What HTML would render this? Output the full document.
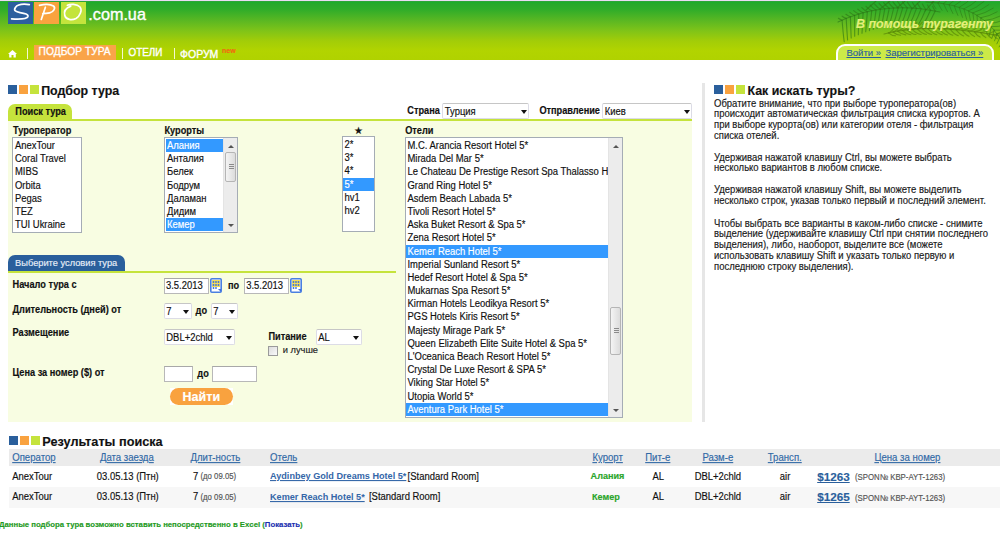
<!DOCTYPE html>
<html><head><meta charset="utf-8"><style>
*{margin:0;padding:0;box-sizing:border-box}
html,body{width:1000px;height:540px;overflow:hidden;background:#fff;font-family:"Liberation Sans",sans-serif;color:#111;-webkit-text-stroke:0.15px}
.a{position:absolute;white-space:nowrap;line-height:1}
#hdr{position:absolute;left:0;top:0;width:1000px;height:60px;background:linear-gradient(#3f9a4a 0px,#1aae28 1px,#28a82c 3px,#2eac2a 8px,#5cb822 20px,#80c418 30px,#a2cd08 40px,#b2d400 50px,#b0d200 59px);border-top:1px solid #eadcf4}
.sq{position:absolute;width:9px;height:9px}
.b{background:#2a5f9c}.o{background:#f9a23f}.g{background:#c5e33c}
.h1{font-size:12.4px;font-weight:bold;color:#111}
.lbl{font-size:9.2px;font-weight:bold;color:#111;transform:translateY(0.5px) scaleY(1.13);transform-origin:0 0.8465em}
.list{position:absolute;background:#fff;border:1px solid #a5acb5;overflow:hidden}
.opt{font-size:9.45px;line-height:13.2px;height:13.2px;padding-left:1.5px;white-space:nowrap;color:#111}
.opt.sel{background:#3399ff;color:#fff}
.opt span{display:inline-block;transform:scaleY(1.08);transform-origin:0 9.87px}
.sb{position:absolute;top:0;right:0;width:14px;bottom:0;background:#ececec;border-left:1px solid #e4e4e4}
.thumb{position:absolute;left:1px;width:11px;background:linear-gradient(90deg,#f4f4f4,#dcdcdc);border:1px solid #b5b5b5;border-radius:2px}
.up,.dn{position:absolute;left:4px;width:0;height:0;border-left:3px solid transparent;border-right:3px solid transparent}
.up{border-bottom:3px solid #555}
.dn{border-top:3px solid #555}
.grip{position:absolute;left:2.5px;width:5px;height:1px;background:#8a8a8a}
.sel2{position:absolute;background:#fff;border:1px solid #dcdce6;border-top:1.5px solid #c6c6c6;border-radius:2px}
.sel2 span{position:absolute;left:1.8px;font-size:9.45px;line-height:1;color:#111;transform:scaleY(1.08);transform-origin:0 0.8465em}
.arr{position:absolute;width:0;height:0;border-left:3px solid transparent;border-right:3px solid transparent;border-top:4px solid #111}
.inp{position:absolute;background:#fff;border:1px solid #b8b8b8;border-top-color:#a8a8a8}
.cal{position:absolute;width:12px;height:15px}
.th{font-size:9.6px;color:#3169a6;text-decoration:underline;transform:scaleY(1.08);transform-origin:0 0.8465em}
.td{font-size:9.45px;color:#111;transform:scaleY(1.08);transform-origin:0 0.8465em}
.hl{font-size:9.12px;font-weight:bold;color:#3466a8;-webkit-text-stroke:0;text-decoration:underline;transform:scaleY(1.08);transform-origin:0 0.8465em}
.sm{font-size:7.8px;color:#555;transform:scaleY(1.08);transform-origin:0 0.8465em}
p.t{position:absolute;left:714px;font-size:9.5px;line-height:10.046px;color:#1a1a1a;white-space:nowrap;transform:scaleY(1.08);transform-origin:0 0}
</style></head><body>
<div id="hdr"></div>
<svg class="a" style="left:0;top:1px" width="1000" height="59" viewBox="0 1 1000 59">
<g><path d="M940.0 12.0 Q885.0 0.0 838.0 22.0" stroke="#2c7616" stroke-width="1.1" fill="none" opacity="0.62" stroke-linecap="round"/>
<path d="M935.2 11.0 Q931.3 19.7 927.4 25.2" stroke="#2c7616" stroke-width="1.1" fill="none" opacity="0.62" stroke-linecap="round"/>
<path d="M935.2 11.0 Q933.9 9.2 932.6 6.2" stroke="#2c7616" stroke-width="1.1" fill="none" opacity="0.62" stroke-linecap="round"/>
<path d="M930.5 10.2 Q926.7 19.1 922.9 24.8" stroke="#2c7616" stroke-width="1.1" fill="none" opacity="0.62" stroke-linecap="round"/>
<path d="M930.5 10.2 Q929.0 8.2 927.5 5.1" stroke="#2c7616" stroke-width="1.1" fill="none" opacity="0.62" stroke-linecap="round"/>
<path d="M925.8 9.4 Q922.1 18.6 918.5 24.5" stroke="#2c7616" stroke-width="1.1" fill="none" opacity="0.62" stroke-linecap="round"/>
<path d="M925.8 9.4 Q924.1 7.4 922.4 4.0" stroke="#2c7616" stroke-width="1.1" fill="none" opacity="0.62" stroke-linecap="round"/>
<path d="M921.1 8.9 Q917.6 18.3 914.1 24.3" stroke="#2c7616" stroke-width="1.1" fill="none" opacity="0.62" stroke-linecap="round"/>
<path d="M921.1 8.9 Q919.2 6.7 917.4 3.2" stroke="#2c7616" stroke-width="1.1" fill="none" opacity="0.62" stroke-linecap="round"/>
<path d="M916.5 8.4 Q913.1 18.1 909.7 24.3" stroke="#2c7616" stroke-width="1.1" fill="none" opacity="0.62" stroke-linecap="round"/>
<path d="M916.5 8.4 Q914.4 6.2 912.4 2.6" stroke="#2c7616" stroke-width="1.1" fill="none" opacity="0.62" stroke-linecap="round"/>
<path d="M911.8 8.1 Q908.7 18.0 905.5 24.4" stroke="#2c7616" stroke-width="1.1" fill="none" opacity="0.62" stroke-linecap="round"/>
<path d="M911.8 8.1 Q909.6 5.8 907.4 2.1" stroke="#2c7616" stroke-width="1.1" fill="none" opacity="0.62" stroke-linecap="round"/>
<path d="M907.3 7.8 Q904.2 18.0 901.2 24.6" stroke="#2c7616" stroke-width="1.1" fill="none" opacity="0.62" stroke-linecap="round"/>
<path d="M907.3 7.8 Q904.9 5.6 902.5 1.8" stroke="#2c7616" stroke-width="1.1" fill="none" opacity="0.62" stroke-linecap="round"/>
<path d="M902.7 7.8 Q899.9 18.1 897.1 24.9" stroke="#2c7616" stroke-width="1.1" fill="none" opacity="0.62" stroke-linecap="round"/>
<path d="M902.7 7.8 Q900.2 5.5 897.7 1.7" stroke="#2c7616" stroke-width="1.1" fill="none" opacity="0.62" stroke-linecap="round"/>
<path d="M898.2 7.8 Q895.6 18.4 893.0 25.4" stroke="#2c7616" stroke-width="1.1" fill="none" opacity="0.62" stroke-linecap="round"/>
<path d="M898.2 7.8 Q895.6 5.6 892.9 1.9" stroke="#2c7616" stroke-width="1.1" fill="none" opacity="0.62" stroke-linecap="round"/>
<path d="M893.7 8.0 Q891.3 18.8 888.9 25.9" stroke="#2c7616" stroke-width="1.1" fill="none" opacity="0.62" stroke-linecap="round"/>
<path d="M893.7 8.0 Q891.0 5.9 888.2 2.2" stroke="#2c7616" stroke-width="1.1" fill="none" opacity="0.62" stroke-linecap="round"/>
<path d="M889.2 8.3 Q887.1 19.4 884.9 26.6" stroke="#2c7616" stroke-width="1.1" fill="none" opacity="0.62" stroke-linecap="round"/>
<path d="M889.2 8.3 Q886.4 6.3 883.6 2.6" stroke="#2c7616" stroke-width="1.1" fill="none" opacity="0.62" stroke-linecap="round"/>
<path d="M884.8 8.7 Q882.9 20.0 881.0 27.5" stroke="#2c7616" stroke-width="1.1" fill="none" opacity="0.62" stroke-linecap="round"/>
<path d="M884.8 8.7 Q881.9 6.8 879.1 3.3" stroke="#2c7616" stroke-width="1.1" fill="none" opacity="0.62" stroke-linecap="round"/>
<path d="M880.4 9.3 Q878.7 20.8 877.1 28.4" stroke="#2c7616" stroke-width="1.1" fill="none" opacity="0.62" stroke-linecap="round"/>
<path d="M880.4 9.3 Q877.5 7.5 874.6 4.1" stroke="#2c7616" stroke-width="1.1" fill="none" opacity="0.62" stroke-linecap="round"/>
<path d="M876.0 10.0 Q874.6 21.7 873.2 29.4" stroke="#2c7616" stroke-width="1.1" fill="none" opacity="0.62" stroke-linecap="round"/>
<path d="M876.0 10.0 Q873.1 8.3 870.2 5.1" stroke="#2c7616" stroke-width="1.1" fill="none" opacity="0.62" stroke-linecap="round"/>
<path d="M871.7 10.8 Q870.5 22.7 869.4 30.6" stroke="#2c7616" stroke-width="1.1" fill="none" opacity="0.62" stroke-linecap="round"/>
<path d="M871.7 10.8 Q868.8 9.3 866.0 6.3" stroke="#2c7616" stroke-width="1.1" fill="none" opacity="0.62" stroke-linecap="round"/>
<path d="M867.3 11.8 Q866.5 23.8 865.7 31.8" stroke="#2c7616" stroke-width="1.1" fill="none" opacity="0.62" stroke-linecap="round"/>
<path d="M867.3 11.8 Q864.6 10.4 861.8 7.6" stroke="#2c7616" stroke-width="1.1" fill="none" opacity="0.62" stroke-linecap="round"/>
<path d="M863.1 12.8 Q862.5 25.1 862.0 33.2" stroke="#2c7616" stroke-width="1.1" fill="none" opacity="0.62" stroke-linecap="round"/>
<path d="M863.1 12.8 Q860.4 11.6 857.7 9.1" stroke="#2c7616" stroke-width="1.1" fill="none" opacity="0.62" stroke-linecap="round"/>
<path d="M858.8 14.0 Q858.6 26.4 858.3 34.7" stroke="#2c7616" stroke-width="1.1" fill="none" opacity="0.62" stroke-linecap="round"/>
<path d="M858.8 14.0 Q856.2 13.0 853.7 10.7" stroke="#2c7616" stroke-width="1.1" fill="none" opacity="0.62" stroke-linecap="round"/>
<path d="M854.6 15.4 Q854.7 27.9 854.7 36.3" stroke="#2c7616" stroke-width="1.1" fill="none" opacity="0.62" stroke-linecap="round"/>
<path d="M854.6 15.4 Q852.2 14.5 849.8 12.4" stroke="#2c7616" stroke-width="1.1" fill="none" opacity="0.62" stroke-linecap="round"/>
<path d="M850.4 16.8 Q850.8 29.6 851.2 38.0" stroke="#2c7616" stroke-width="1.1" fill="none" opacity="0.62" stroke-linecap="round"/>
<path d="M850.4 16.8 Q848.1 16.1 845.9 14.3" stroke="#2c7616" stroke-width="1.1" fill="none" opacity="0.62" stroke-linecap="round"/>
<path d="M846.2 18.4 Q846.9 31.3 847.6 39.9" stroke="#2c7616" stroke-width="1.1" fill="none" opacity="0.62" stroke-linecap="round"/>
<path d="M846.2 18.4 Q844.2 17.8 842.1 16.2" stroke="#2c7616" stroke-width="1.1" fill="none" opacity="0.62" stroke-linecap="round"/>
<path d="M842.1 20.2 Q843.1 33.1 844.2 41.8" stroke="#2c7616" stroke-width="1.1" fill="none" opacity="0.62" stroke-linecap="round"/>
<path d="M842.1 20.2 Q840.3 19.6 838.4 18.3" stroke="#2c7616" stroke-width="1.1" fill="none" opacity="0.62" stroke-linecap="round"/>
<path d="M876.0 1.0 Q871.0 5.5 866.0 10.0" stroke="#2c7616" stroke-width="1.1" fill="none" opacity="0.65" stroke-linecap="round"/>
<path d="M890.0 1.0 Q885.0 5.0 880.0 9.0" stroke="#2c7616" stroke-width="1.1" fill="none" opacity="0.65" stroke-linecap="round"/>
<path d="M905.0 1.0 Q901.0 4.5 897.0 8.0" stroke="#2c7616" stroke-width="1.1" fill="none" opacity="0.65" stroke-linecap="round"/>
<path d="M920.0 1.0 Q916.0 5.0 912.0 9.0" stroke="#2c7616" stroke-width="1.1" fill="none" opacity="0.65" stroke-linecap="round"/>
<path d="M934.0 1.0 Q929.5 6.0 925.0 11.0" stroke="#2c7616" stroke-width="1.1" fill="none" opacity="0.65" stroke-linecap="round"/>
<path d="M884.0 34.0 Q930.0 22.0 1000.0 36.0" stroke="#5a8808" stroke-width="1.1" fill="none" opacity="0.7" stroke-linecap="round"/>
<path d="M888.4 32.9 Q891.7 32.1 895.0 26.8" stroke="#5a8808" stroke-width="1.1" fill="none" opacity="0.7" stroke-linecap="round"/>
<path d="M888.4 32.9 Q891.9 35.9 895.5 35.8" stroke="#5a8808" stroke-width="1.1" fill="none" opacity="0.7" stroke-linecap="round"/>
<path d="M893.0 32.0 Q896.7 31.2 900.3 25.5" stroke="#5a8808" stroke-width="1.1" fill="none" opacity="0.7" stroke-linecap="round"/>
<path d="M893.0 32.0 Q896.8 35.3 900.6 35.3" stroke="#5a8808" stroke-width="1.1" fill="none" opacity="0.7" stroke-linecap="round"/>
<path d="M897.6 31.1 Q901.7 30.4 905.8 24.4" stroke="#5a8808" stroke-width="1.1" fill="none" opacity="0.7" stroke-linecap="round"/>
<path d="M897.6 31.1 Q901.7 34.8 905.7 34.9" stroke="#5a8808" stroke-width="1.1" fill="none" opacity="0.7" stroke-linecap="round"/>
<path d="M902.4 30.4 Q906.8 29.7 911.3 23.5" stroke="#5a8808" stroke-width="1.1" fill="none" opacity="0.7" stroke-linecap="round"/>
<path d="M902.4 30.4 Q906.6 34.4 910.9 34.7" stroke="#5a8808" stroke-width="1.1" fill="none" opacity="0.7" stroke-linecap="round"/>
<path d="M907.3 29.8 Q912.0 29.2 916.8 22.7" stroke="#5a8808" stroke-width="1.1" fill="none" opacity="0.7" stroke-linecap="round"/>
<path d="M907.3 29.8 Q911.7 34.2 916.0 34.5" stroke="#5a8808" stroke-width="1.1" fill="none" opacity="0.7" stroke-linecap="round"/>
<path d="M912.2 29.3 Q917.3 28.8 922.3 22.2" stroke="#5a8808" stroke-width="1.1" fill="none" opacity="0.7" stroke-linecap="round"/>
<path d="M912.2 29.3 Q916.7 34.0 921.2 34.5" stroke="#5a8808" stroke-width="1.1" fill="none" opacity="0.7" stroke-linecap="round"/>
<path d="M917.3 28.9 Q922.6 28.6 927.9 21.9" stroke="#5a8808" stroke-width="1.1" fill="none" opacity="0.7" stroke-linecap="round"/>
<path d="M917.3 28.9 Q921.9 33.8 926.5 34.5" stroke="#5a8808" stroke-width="1.1" fill="none" opacity="0.7" stroke-linecap="round"/>
<path d="M922.5 28.6 Q928.0 28.4 933.4 21.8" stroke="#5a8808" stroke-width="1.1" fill="none" opacity="0.7" stroke-linecap="round"/>
<path d="M922.5 28.6 Q927.1 33.8 931.7 34.5" stroke="#5a8808" stroke-width="1.1" fill="none" opacity="0.7" stroke-linecap="round"/>
<path d="M927.8 28.5 Q933.4 28.4 939.0 21.8" stroke="#5a8808" stroke-width="1.1" fill="none" opacity="0.7" stroke-linecap="round"/>
<path d="M927.8 28.5 Q932.4 33.8 936.9 34.7" stroke="#5a8808" stroke-width="1.1" fill="none" opacity="0.7" stroke-linecap="round"/>
<path d="M933.3 28.5 Q938.9 28.5 944.5 22.1" stroke="#5a8808" stroke-width="1.1" fill="none" opacity="0.7" stroke-linecap="round"/>
<path d="M933.3 28.5 Q937.7 33.8 942.2 34.8" stroke="#5a8808" stroke-width="1.1" fill="none" opacity="0.7" stroke-linecap="round"/>
<path d="M938.8 28.6 Q944.4 28.7 950.1 22.5" stroke="#5a8808" stroke-width="1.1" fill="none" opacity="0.7" stroke-linecap="round"/>
<path d="M938.8 28.6 Q943.1 34.0 947.5 35.0" stroke="#5a8808" stroke-width="1.1" fill="none" opacity="0.7" stroke-linecap="round"/>
<path d="M944.4 28.8 Q950.0 29.0 955.6 23.0" stroke="#5a8808" stroke-width="1.1" fill="none" opacity="0.7" stroke-linecap="round"/>
<path d="M944.4 28.8 Q948.6 34.1 952.8 35.3" stroke="#5a8808" stroke-width="1.1" fill="none" opacity="0.7" stroke-linecap="round"/>
<path d="M950.1 29.1 Q955.6 29.5 961.1 23.8" stroke="#5a8808" stroke-width="1.1" fill="none" opacity="0.7" stroke-linecap="round"/>
<path d="M950.1 29.1 Q954.2 34.4 958.2 35.6" stroke="#5a8808" stroke-width="1.1" fill="none" opacity="0.7" stroke-linecap="round"/>
<path d="M956.0 29.6 Q961.3 30.0 966.5 24.6" stroke="#5a8808" stroke-width="1.1" fill="none" opacity="0.7" stroke-linecap="round"/>
<path d="M956.0 29.6 Q959.8 34.7 963.6 35.9" stroke="#5a8808" stroke-width="1.1" fill="none" opacity="0.7" stroke-linecap="round"/>
<path d="M962.0 30.1 Q967.0 30.6 972.0 25.6" stroke="#5a8808" stroke-width="1.1" fill="none" opacity="0.7" stroke-linecap="round"/>
<path d="M962.0 30.1 Q965.5 35.0 969.0 36.2" stroke="#5a8808" stroke-width="1.1" fill="none" opacity="0.7" stroke-linecap="round"/>
<path d="M968.0 30.8 Q972.8 31.4 977.5 26.8" stroke="#5a8808" stroke-width="1.1" fill="none" opacity="0.7" stroke-linecap="round"/>
<path d="M968.0 30.8 Q971.3 35.5 974.5 36.6" stroke="#5a8808" stroke-width="1.1" fill="none" opacity="0.7" stroke-linecap="round"/>
<path d="M974.2 31.6 Q978.6 32.2 983.0 28.0" stroke="#5a8808" stroke-width="1.1" fill="none" opacity="0.7" stroke-linecap="round"/>
<path d="M974.2 31.6 Q977.2 36.0 980.1 37.1" stroke="#5a8808" stroke-width="1.1" fill="none" opacity="0.7" stroke-linecap="round"/>
<path d="M980.5 32.5 Q984.5 33.1 988.6 29.4" stroke="#5a8808" stroke-width="1.1" fill="none" opacity="0.7" stroke-linecap="round"/>
<path d="M980.5 32.5 Q983.1 36.5 985.8 37.6" stroke="#5a8808" stroke-width="1.1" fill="none" opacity="0.7" stroke-linecap="round"/>
<path d="M986.9 33.6 Q990.5 34.2 994.2 30.9" stroke="#5a8808" stroke-width="1.1" fill="none" opacity="0.7" stroke-linecap="round"/>
<path d="M986.9 33.6 Q989.2 37.2 991.6 38.2" stroke="#5a8808" stroke-width="1.1" fill="none" opacity="0.7" stroke-linecap="round"/>
<path d="M993.4 34.7 Q996.6 35.3 999.8 32.5" stroke="#5a8808" stroke-width="1.1" fill="none" opacity="0.7" stroke-linecap="round"/>
<path d="M993.4 34.7 Q995.4 37.9 997.4 38.8" stroke="#5a8808" stroke-width="1.1" fill="none" opacity="0.7" stroke-linecap="round"/>
<path d="M926.0 2.0 Q985.0 4.0 1004.0 46.0" stroke="#2c7616" stroke-width="1.0" fill="none" opacity="0.55" stroke-linecap="round"/>
<path d="M932.1 2.3 Q936.1 -1.3 940.0 -7.4" stroke="#2c7616" stroke-width="1.0" fill="none" opacity="0.55" stroke-linecap="round"/>
<path d="M932.1 2.3 Q934.1 6.4 936.0 8.9" stroke="#2c7616" stroke-width="1.0" fill="none" opacity="0.55" stroke-linecap="round"/>
<path d="M938.0 2.9 Q942.5 -0.9 947.1 -7.5" stroke="#2c7616" stroke-width="1.0" fill="none" opacity="0.55" stroke-linecap="round"/>
<path d="M938.0 2.9 Q940.0 7.4 942.0 10.3" stroke="#2c7616" stroke-width="1.0" fill="none" opacity="0.55" stroke-linecap="round"/>
<path d="M943.6 3.6 Q948.8 -0.2 954.0 -7.1" stroke="#2c7616" stroke-width="1.0" fill="none" opacity="0.55" stroke-linecap="round"/>
<path d="M943.6 3.6 Q945.6 8.6 947.6 11.8" stroke="#2c7616" stroke-width="1.0" fill="none" opacity="0.55" stroke-linecap="round"/>
<path d="M949.1 4.6 Q954.9 0.7 960.6 -6.3" stroke="#2c7616" stroke-width="1.0" fill="none" opacity="0.55" stroke-linecap="round"/>
<path d="M949.1 4.6 Q951.0 10.1 952.9 13.5" stroke="#2c7616" stroke-width="1.0" fill="none" opacity="0.55" stroke-linecap="round"/>
<path d="M954.3 5.8 Q960.6 2.1 967.0 -5.0" stroke="#2c7616" stroke-width="1.0" fill="none" opacity="0.55" stroke-linecap="round"/>
<path d="M954.3 5.8 Q956.1 11.6 957.9 15.4" stroke="#2c7616" stroke-width="1.0" fill="none" opacity="0.55" stroke-linecap="round"/>
<path d="M959.3 7.3 Q966.2 3.7 973.0 -3.3" stroke="#2c7616" stroke-width="1.0" fill="none" opacity="0.55" stroke-linecap="round"/>
<path d="M959.3 7.3 Q960.9 13.4 962.5 17.4" stroke="#2c7616" stroke-width="1.0" fill="none" opacity="0.55" stroke-linecap="round"/>
<path d="M964.0 8.9 Q971.4 5.7 978.7 -1.1" stroke="#2c7616" stroke-width="1.0" fill="none" opacity="0.55" stroke-linecap="round"/>
<path d="M964.0 8.9 Q965.4 15.3 966.7 19.4" stroke="#2c7616" stroke-width="1.0" fill="none" opacity="0.55" stroke-linecap="round"/>
<path d="M968.6 10.8 Q976.3 8.0 984.0 1.5" stroke="#2c7616" stroke-width="1.0" fill="none" opacity="0.55" stroke-linecap="round"/>
<path d="M968.6 10.8 Q969.6 17.3 970.7 21.6" stroke="#2c7616" stroke-width="1.0" fill="none" opacity="0.55" stroke-linecap="round"/>
<path d="M972.9 12.9 Q980.9 10.5 988.9 4.6" stroke="#2c7616" stroke-width="1.0" fill="none" opacity="0.55" stroke-linecap="round"/>
<path d="M972.9 12.9 Q973.6 19.4 974.3 23.8" stroke="#2c7616" stroke-width="1.0" fill="none" opacity="0.55" stroke-linecap="round"/>
<path d="M977.0 15.2 Q985.1 13.4 993.3 8.1" stroke="#2c7616" stroke-width="1.0" fill="none" opacity="0.55" stroke-linecap="round"/>
<path d="M977.0 15.2 Q977.4 21.7 977.7 26.0" stroke="#2c7616" stroke-width="1.0" fill="none" opacity="0.55" stroke-linecap="round"/>
<path d="M980.9 17.7 Q989.0 16.5 997.2 11.8" stroke="#2c7616" stroke-width="1.0" fill="none" opacity="0.55" stroke-linecap="round"/>
<path d="M980.9 17.7 Q980.9 24.1 980.9 28.3" stroke="#2c7616" stroke-width="1.0" fill="none" opacity="0.55" stroke-linecap="round"/>
<path d="M984.6 20.5 Q992.6 19.8 1000.6 15.9" stroke="#2c7616" stroke-width="1.0" fill="none" opacity="0.55" stroke-linecap="round"/>
<path d="M984.6 20.5 Q984.2 26.6 983.9 30.6" stroke="#2c7616" stroke-width="1.0" fill="none" opacity="0.55" stroke-linecap="round"/>
<path d="M988.0 23.5 Q995.7 23.4 1003.5 20.1" stroke="#2c7616" stroke-width="1.0" fill="none" opacity="0.55" stroke-linecap="round"/>
<path d="M988.0 23.5 Q987.3 29.2 986.7 33.0" stroke="#2c7616" stroke-width="1.0" fill="none" opacity="0.55" stroke-linecap="round"/>
<path d="M991.2 26.7 Q998.6 27.1 1005.9 24.6" stroke="#2c7616" stroke-width="1.0" fill="none" opacity="0.55" stroke-linecap="round"/>
<path d="M991.2 26.7 Q990.3 32.0 989.4 35.5" stroke="#2c7616" stroke-width="1.0" fill="none" opacity="0.55" stroke-linecap="round"/>
<path d="M994.2 30.1 Q1001.0 30.9 1007.8 29.1" stroke="#2c7616" stroke-width="1.0" fill="none" opacity="0.55" stroke-linecap="round"/>
<path d="M994.2 30.1 Q993.1 34.9 992.0 38.1" stroke="#2c7616" stroke-width="1.0" fill="none" opacity="0.55" stroke-linecap="round"/>
<path d="M997.0 33.7 Q1003.2 34.9 1009.4 33.7" stroke="#2c7616" stroke-width="1.0" fill="none" opacity="0.55" stroke-linecap="round"/>
<path d="M997.0 33.7 Q995.7 38.1 994.5 40.9" stroke="#2c7616" stroke-width="1.0" fill="none" opacity="0.55" stroke-linecap="round"/>
<path d="M999.6 37.6 Q1005.0 39.0 1010.5 38.3" stroke="#2c7616" stroke-width="1.0" fill="none" opacity="0.55" stroke-linecap="round"/>
<path d="M999.6 37.6 Q998.2 41.4 996.9 43.8" stroke="#2c7616" stroke-width="1.0" fill="none" opacity="0.55" stroke-linecap="round"/>
<path d="M1001.9 41.7 Q1006.6 43.2 1011.4 42.9" stroke="#2c7616" stroke-width="1.0" fill="none" opacity="0.55" stroke-linecap="round"/>
<path d="M1001.9 41.7 Q1000.6 44.9 999.2 46.9" stroke="#2c7616" stroke-width="1.0" fill="none" opacity="0.55" stroke-linecap="round"/></g>
</svg>
<div class="a" style="left:8px;top:2px;width:25px;height:22px;background:#2c5f9e"></div>
<div class="a" style="left:34px;top:2px;width:25px;height:22px;background:#f9a33f"></div>
<div class="a" style="left:61px;top:2px;width:25px;height:22px;background:#c4e43c"></div>
<svg class="a" style="left:0;top:0" width="100" height="26">
<path d="M29.3 4.6 C25 4,18 3.8,15.4 7.4 C13.2 10.6,16 12,20 12.6 C25 13.3,28.6 14.4,27.9 16.6 C27 19.2,20 19.4,11.6 18.9" stroke="#fff" stroke-width="1.7" fill="none" stroke-linecap="round"/>
<path d="M39.5 5.4 C43 4.5,50 3.8,53.5 6 C56 8,53.5 12,49.6 12.9 C47 13.5,44.5 13.7,42.8 13.7 M41.3 19.4 L45.4 7.2" stroke="#fff" stroke-width="1.7" fill="none" stroke-linecap="round"/>
<path d="M67.4 5.3 C70 4,77 3.6,80 7 C82.5 10,80 16,76 18.5 C72 20.5,66 20,64.8 15.5 C63.5 11,66 8,70.7 6.1" stroke="#fff" stroke-width="1.7" fill="none" stroke-linecap="round"/>
</svg>
<div class="a" style="left:88.3px;top:6.2px;font-size:16.2px;color:#fff;-webkit-text-stroke:0.35px #fff">.com.ua</div>

<!-- nav -->
<svg class="a" style="left:8px;top:50px" width="9" height="8" viewBox="0 0 9 8"><path d="M4.5 0 L9 4 L7.8 4 L7.8 7.5 L5.5 7.5 L5.5 5 L3.5 5 L3.5 7.5 L1.2 7.5 L1.2 4 L0 4 Z" fill="#fff"/></svg>
<div class="a" style="left:26.5px;top:47.5px;width:1.3px;height:11.5px;background:#f4f8d0"></div>
<div class="a" style="left:34px;top:45px;width:82px;height:15px;background:#f9a449"></div>
<div class="a" style="left:38.6px;top:47.2px;font-size:10.25px;color:#fff;-webkit-text-stroke:0.3px #fff">ПОДБОР ТУРА</div>
<div class="a" style="left:122px;top:47.5px;width:1.3px;height:11.5px;background:#f4f8d0"></div>
<div class="a" style="left:128.5px;top:47.3px;font-size:9.9px;color:#fff;-webkit-text-stroke:0.35px #fff;transform:scaleY(1.08);transform-origin:0 0">ОТЕЛИ</div>
<div class="a" style="left:173.5px;top:47.5px;width:1.3px;height:11.5px;background:#f4f8d0"></div>
<div class="a" style="left:180px;top:48.9px;font-size:10.5px;color:#fff;-webkit-text-stroke:0.35px #fff;transform:scaleY(1.05);transform-origin:0 0">ФОРУМ</div>
<div class="a" style="left:222px;top:47px;font-size:7px;font-weight:bold;color:#f06a10">new</div>

<div class="a" style="left:856px;top:17.9px;font-size:12.4px;font-weight:bold;font-style:italic;color:#e4f07a">В помощь турагенту</div>
<div class="a" style="left:836px;top:44px;width:158px;height:20px;background:#ccea48;border:2px solid #fff;border-radius:9px 9px 0 0"></div>
<div class="a" style="left:846.5px;top:48px;font-size:9.5px;color:#2a5f9c;text-decoration:underline">Войти »</div>
<div class="a" style="left:885.5px;top:48px;font-size:9.5px;color:#2a5f9c;text-decoration:underline">Зарегистрироваться »</div>
<div class="a" style="left:0;top:60px;width:1000px;height:20px;background:#fff"></div>

<!-- left heading -->
<div class="sq b" style="left:8px;top:85px"></div><div class="sq o" style="left:19px;top:85px"></div><div class="sq g" style="left:30px;top:85px"></div>
<div class="a h1" style="left:41.2px;top:85px">Подбор тура</div>

<div class="a" style="left:8px;top:103.5px;width:64px;height:16.5px;background:#c5e33c;border-radius:7px 7px 0 0"></div>
<div class="a lbl" style="left:15.3px;top:107.5px">Поиск тура</div>
<div class="a" style="left:8px;top:119px;width:684px;height:2px;background:#c5e33c"></div>
<div class="a" style="left:8px;top:121px;width:684px;height:301px;background:#f8fde2"></div>

<div class="a lbl" style="left:407.3px;top:106.6px">Страна</div>
<div class="sel2" style="left:442px;top:103px;width:87px;height:16px"><span style="top:2.5px">Турция</span><div class="arr" style="left:77.5px;top:5.5px"></div></div>
<div class="a lbl" style="left:539.4px;top:106.6px">Отправление</div>
<div class="sel2" style="left:602px;top:103px;width:90px;height:16px"><span style="top:2.5px">Киев</span><div class="arr" style="left:80.5px;top:5.5px"></div></div>

<div class="a lbl" style="left:12.9px;top:127px">Туроператор</div>
<div class="list" style="left:12px;top:137px;width:70px;height:96px;padding:1px 0 0 0.5px"><div class="opt"><span>AnexTour</span></div><div class="opt"><span>Coral Travel</span></div><div class="opt"><span>MIBS</span></div><div class="opt"><span>Orbita</span></div><div class="opt"><span>Pegas</span></div><div class="opt"><span>TEZ</span></div><div class="opt"><span>TUI Ukraine</span></div></div>

<div class="a lbl" style="left:164.5px;top:127px">Курорты</div>
<div class="list" style="left:164px;top:137px;width:74px;height:96px;padding:1px 0 0 0.5px"><div class="opt sel"><span>Алания</span></div><div class="opt"><span>Анталия</span></div><div class="opt"><span>Белек</span></div><div class="opt"><span>Бодрум</span></div><div class="opt"><span>Даламан</span></div><div class="opt"><span>Дидим</span></div><div class="opt sel"><span>Кемер</span></div>
<div class="sb"><div class="up" style="top:7px"></div><div class="thumb" style="top:14px;height:30px"><div class="grip" style="top:11px"></div><div class="grip" style="top:13px"></div><div class="grip" style="top:15px"></div></div><div class="dn" style="top:86px"></div></div></div>

<div class="a" style="left:354px;top:125.8px;font-size:10px;color:#111">★</div>
<div class="list" style="left:342px;top:136px;width:33px;height:96px;padding:1px 0 0 0"><div class="opt"><span>2*</span></div><div class="opt"><span>3*</span></div><div class="opt"><span>4*</span></div><div class="opt sel"><span>5*</span></div><div class="opt"><span>hv1</span></div><div class="opt"><span>hv2</span></div></div>

<div class="a lbl" style="left:405.2px;top:127px">Отели</div>
<div class="list" style="left:405px;top:137px;width:218px;height:281px;padding:1px 0 0 0"><div class="opt"><span>M.C. Arancia Resort Hotel 5*</span></div><div class="opt"><span>Mirada Del Mar 5*</span></div><div class="opt"><span>Le Chateau De Prestige Resort Spa Thalasso Hotel 5*</span></div><div class="opt"><span>Grand Ring Hotel 5*</span></div><div class="opt"><span>Asdem Beach Labada 5*</span></div><div class="opt"><span>Tivoli Resort Hotel 5*</span></div><div class="opt"><span>Aska Buket Resort &amp; Spa 5*</span></div><div class="opt"><span>Zena Resort Hotel 5*</span></div><div class="opt sel"><span>Kemer Reach Hotel 5*</span></div><div class="opt"><span>Imperial Sunland Resort 5*</span></div><div class="opt"><span>Hedef Resort Hotel &amp; Spa 5*</span></div><div class="opt"><span>Mukarnas Spa Resort 5*</span></div><div class="opt"><span>Kirman Hotels Leodikya Resort 5*</span></div><div class="opt"><span>PGS Hotels Kiris Resort 5*</span></div><div class="opt"><span>Majesty Mirage Park 5*</span></div><div class="opt"><span>Queen Elizabeth Elite Suite Hotel &amp; Spa 5*</span></div><div class="opt"><span>L'Oceanica Beach Resort Hotel 5*</span></div><div class="opt"><span>Crystal De Luxe Resort &amp; SPA 5*</span></div><div class="opt"><span>Viking Star Hotel 5*</span></div><div class="opt"><span>Utopia World 5*</span></div><div class="opt sel"><span>Aventura Park Hotel 5*</span></div>
<div class="sb"><div class="up" style="top:7px"></div><div class="thumb" style="top:169px;height:48px"><div class="grip" style="top:20px"></div><div class="grip" style="top:22px"></div><div class="grip" style="top:24px"></div></div><div class="dn" style="top:271px"></div></div></div>

<div class="a" style="left:8px;top:255px;width:117px;height:16px;background:#2a5f9c;border-radius:7px 7px 0 0"></div>
<div class="a" style="left:15.1px;top:258.6px;font-size:9.28px;color:#e8eef8">Выберите условия тура</div>
<div class="a" style="left:8px;top:271px;width:388px;height:2px;background:#c5e33c"></div>

<div class="a lbl" style="left:12.6px;top:280.8px">Начало тура с</div>
<div class="inp" style="left:163.5px;top:278px;width:45px;height:16px"></div>
<div class="a td" style="left:166px;top:281.2px">3.5.2013</div>
<div class="a" style="left:210px;top:278px"><svg class="cal" viewBox="0 0 12 15" width="12" height="15"><rect x="0.8" y="0.8" width="10.4" height="13.4" rx="1" fill="#fff" stroke="#4a7fe0" stroke-width="1.6"/><rect x="2" y="2" width="8" height="7" fill="#f3dd5a"/><g fill="#3a6fe0"><circle cx="3.5" cy="4" r=".9"/><circle cx="6" cy="4" r=".9"/><circle cx="8.5" cy="4" r=".9"/><circle cx="3.5" cy="7" r=".9"/><circle cx="6" cy="7" r=".9"/><circle cx="8.5" cy="7" r=".9"/><circle cx="3.5" cy="10" r=".9"/><circle cx="6" cy="10" r=".9"/></g><path d="M8 11 L11 11 L11 14 Z" fill="#3a6fe0"/></svg></div>
<div class="a lbl" style="left:228px;top:282.2px">по</div>
<div class="inp" style="left:243.7px;top:278px;width:45px;height:16px"></div>
<div class="a td" style="left:246.2px;top:281.2px">3.5.2013</div>
<div class="a" style="left:290px;top:278px"><svg class="cal" viewBox="0 0 12 15" width="12" height="15"><rect x="0.8" y="0.8" width="10.4" height="13.4" rx="1" fill="#fff" stroke="#4a7fe0" stroke-width="1.6"/><rect x="2" y="2" width="8" height="7" fill="#f3dd5a"/><g fill="#3a6fe0"><circle cx="3.5" cy="4" r=".9"/><circle cx="6" cy="4" r=".9"/><circle cx="8.5" cy="4" r=".9"/><circle cx="3.5" cy="7" r=".9"/><circle cx="6" cy="7" r=".9"/><circle cx="8.5" cy="7" r=".9"/><circle cx="3.5" cy="10" r=".9"/><circle cx="6" cy="10" r=".9"/></g><path d="M8 11 L11 11 L11 14 Z" fill="#3a6fe0"/></svg></div>

<div class="a lbl" style="left:12.5px;top:306.3px">Длительность (дней) от</div>
<div class="sel2" style="left:163.5px;top:303px;width:28px;height:16px"><span style="top:2.5px">7</span><div class="arr" style="left:18.5px;top:5.5px"></div></div>
<div class="a lbl" style="left:195.6px;top:307.4px">до</div>
<div class="sel2" style="left:210.5px;top:303px;width:27px;height:16px"><span style="top:2.5px">7</span><div class="arr" style="left:17.5px;top:5.5px"></div></div>

<div class="a lbl" style="left:12.5px;top:329.4px">Размещение</div>
<div class="sel2" style="left:163.5px;top:329px;width:71px;height:16px"><span style="top:2.5px">DBL+2chld</span><div class="arr" style="left:61.5px;top:5.5px"></div></div>
<div class="a lbl" style="left:268.4px;top:333.1px">Питание</div>
<div class="sel2" style="left:315.5px;top:329px;width:46px;height:16px"><span style="top:2.5px">AL</span><div class="arr" style="left:36.5px;top:5.5px"></div></div>
<div class="a" style="left:268px;top:346px;width:10px;height:10px;border:1px solid #9a9a9a;background:linear-gradient(135deg,#dcdcdc,#fafafa)"></div>
<div class="a" style="left:282.7px;top:346.3px;font-size:9.3px;color:#222">и лучше</div>

<div class="a lbl" style="left:12.5px;top:368.8px">Цена за номер ($) от</div>
<div class="inp" style="left:163.5px;top:366px;width:29px;height:16px"></div>
<div class="a lbl" style="left:197.3px;top:370px">до</div>
<div class="inp" style="left:212px;top:366px;width:45px;height:16px"></div>
<div class="a" style="left:170px;top:388px;width:63px;height:17px;background:#fff"></div><div class="a" style="left:170px;top:388px;width:63px;height:17px;background:#f9a23f;border-radius:9px"></div>
<div class="a" style="left:182.6px;top:390.6px;font-size:12.5px;font-weight:bold;color:#fff">Найти</div>

<!-- right -->
<div class="a" style="left:702px;top:83px;width:3px;height:339px;background:#e6e6e6"></div>
<div class="sq b" style="left:714px;top:85px"></div><div class="sq o" style="left:725px;top:85px"></div><div class="sq g" style="left:736px;top:85px"></div>
<div class="a h1" style="left:747.5px;top:84.8px">Как искать туры?</div>
<p class="t" style="top:97.8px">Обратите внимание, что при выборе туроператора(ов)<br>происходит автоматическая фильтрация списка курортов. А<br>при выборе курорта(ов) или категории отеля - фильтрация<br>списка отелей.<br><br>Удерживая нажатой клавишу Ctrl, вы можете выбрать<br>несколько вариантов в любом списке.<br><br>Удерживая нажатой клавишу Shift, вы можете выделить<br>несколько строк, указав только первый и последний элемент.<br><br>Чтобы выбрать все варианты в каком-либо списке - снимите<br>выделение (удерживайте клавишу Ctrl при снятии последнего<br>выделения), либо, наоборот, выделите все (можете<br>использовать клавишу Shift и указать только первую и<br>последнюю строку выделения).</p>

<!-- results -->
<div class="sq b" style="left:9px;top:436px"></div><div class="sq o" style="left:20px;top:436px"></div><div class="sq g" style="left:31px;top:436px"></div>
<div class="a h1" style="left:42.3px;top:436.3px;font-size:12.7px">Результаты поиска</div>
<div class="a" style="left:9px;top:449px;width:991px;height:17px;background:#ebebeb"></div>
<div class="a" style="left:9px;top:487px;width:991px;height:21px;background:#f7f7f7"></div>
<div class="a th" style="left:12.2px;top:452.6px">Оператор</div>
<div class="a th" style="left:99.9px;top:452.6px">Дата заезда</div>
<div class="a th" style="left:190.5px;top:452.6px">Длит-ность</div>
<div class="a th" style="left:270px;top:452.6px">Отель</div>
<div class="a th" style="left:592.4px;top:452.6px">Курорт</div>
<div class="a th" style="left:645.2px;top:452.6px">Пит-е</div>
<div class="a th" style="left:702.4px;top:452.6px">Разм-е</div>
<div class="a th" style="left:767.8px;top:452.6px">Трансп.</div>
<div class="a th" style="left:874.4px;top:452.6px">Цена за номер</div>

<div class="a td" style="left:12.2px;top:471.5px">AnexTour</div>
<div class="a td" style="left:96.8px;top:471.5px">03.05.13 (Птн)</div>
<div class="a td" style="left:193px;top:471.5px">7</div><div class="a sm" style="left:200.4px;top:473.3px">(до 09.05)</div>
<div class="a hl" style="left:270px;top:471.8px">Aydinbey Gold Dreams Hotel 5*</div><div class="a td" style="left:407.6px;top:471.5px">[Standard Room]</div>
<div class="a" style="left:590.6px;top:471.8px;font-size:9.1px;font-weight:bold;color:#2aa52a">Алания</div>
<div class="a td" style="left:652.5px;top:471.5px">AL</div>
<div class="a td" style="left:694.7px;top:471.5px">DBL+2chld</div>
<div class="a td" style="left:779.8px;top:471.5px">air</div>
<div class="a" style="left:817.2px;top:470.8px;font-size:11.7px;font-weight:bold;color:#2a5f9c;text-decoration:underline">$1263</div>
<div class="a sm" style="left:855px;top:474px">(SPON№ KBP-AYT-1263)</div>

<div class="a td" style="left:12.2px;top:492.2px">AnexTour</div>
<div class="a td" style="left:96.8px;top:492.2px">03.05.13 (Птн)</div>
<div class="a td" style="left:193px;top:492.2px">7</div><div class="a sm" style="left:200.4px;top:494px">(до 09.05)</div>
<div class="a hl" style="left:270px;top:492.5px">Kemer Reach Hotel 5*</div><div class="a td" style="left:369px;top:492.2px">[Standard Room]</div>
<div class="a" style="left:592px;top:492.5px;font-size:9.1px;font-weight:bold;color:#2aa52a">Кемер</div>
<div class="a td" style="left:652.5px;top:492.2px">AL</div>
<div class="a td" style="left:694.7px;top:492.2px">DBL+2chld</div>
<div class="a td" style="left:779.8px;top:492.2px">air</div>
<div class="a" style="left:817.2px;top:491.4px;font-size:11.7px;font-weight:bold;color:#2a5f9c;text-decoration:underline">$1265</div>
<div class="a sm" style="left:855px;top:494.7px">(SPON№ KBP-AYT-1263)</div>

<div class="a" style="left:-1px;top:521px;font-size:7.76px;font-weight:bold;color:#1e9a1e">Данные подбора тура возможно вставить непосредственно в Excel (<span style="color:#1a2fb0">Показать</span>)</div>
</body></html>
